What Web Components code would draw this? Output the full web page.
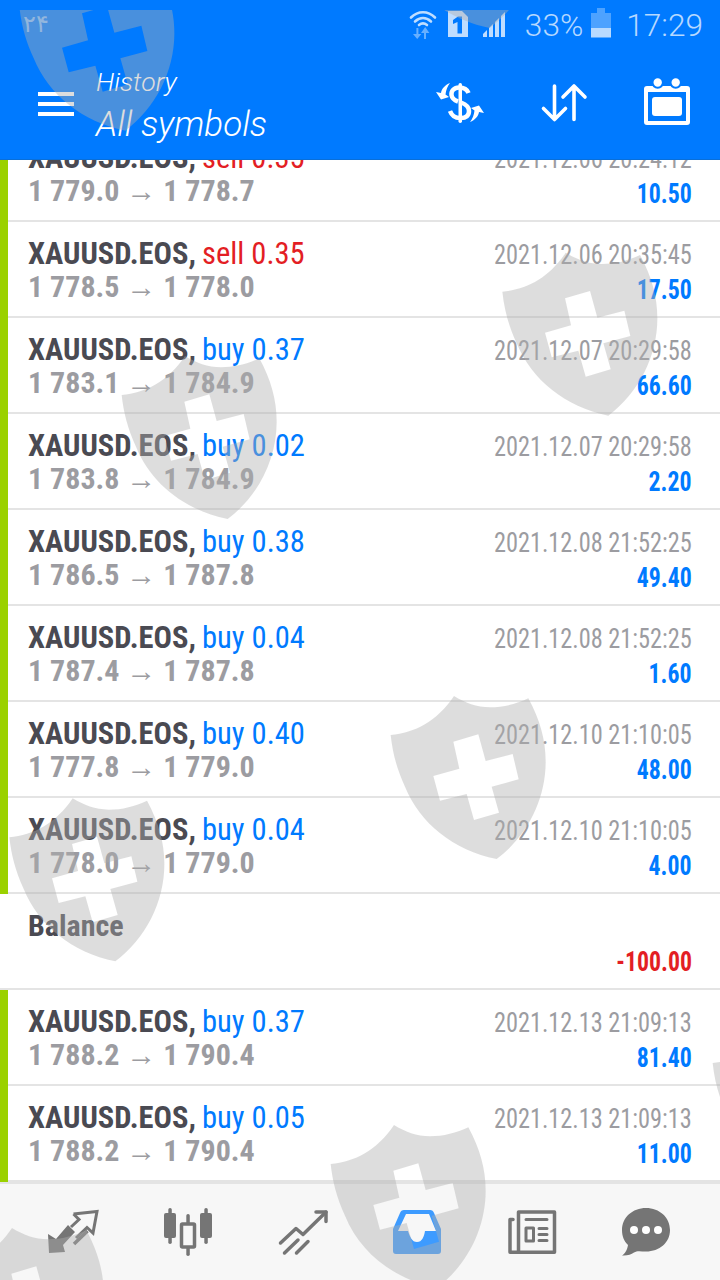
<!DOCTYPE html>
<html><head><meta charset="utf-8">
<style>
html,body{margin:0;padding:0;background:#fff}
body{width:720px;height:1280px;overflow:hidden;font-family:"Roboto","Liberation Sans",sans-serif}
b.bu,b.se{font-weight:400;font-size:32px;display:inline-block;transform:scaleX(.955);transform-origin:left;margin-left:-1px}
b.bu{color:#007aff}
b.se{color:#e31e24}
</style></head><body>
<template id="t-app"><style>
:host{display:flex;flex-direction:column;width:720px;height:1280px;position:relative;overflow:hidden;background:#fff}
.list{flex:1;min-height:0;overflow:hidden}
.scroll{margin-top:-34px;display:flex;flex-direction:column}
</style>
<slot name="top"></slot>
<div class="list"><div class="scroll"><slot></slot></div></div>
<slot name="bottom"></slot>
<slot name="mark"></slot></template>

<template id="t-head"><style>
:host{display:flex;flex-direction:column;height:160px;box-sizing:border-box;background:#007aff;border-bottom:1px solid #0a6fd8;color:#fff;flex:none;position:relative;z-index:1}
.status{height:50px;display:flex;align-items:center;color:rgba(255,255,255,.72);font-size:31.600px;font-weight:300}
.day{font:400 24px "DejaVu Sans",sans-serif;margin-left:23px;margin-top:-2px;color:rgba(255,255,255,.5);flex:1}
.bar{flex:1;display:flex;align-items:flex-start;position:relative}
.burger{margin:42px 0 0 38px;width:36px;display:flex;flex-direction:column;gap:6px}
.burger i{display:block;height:4px;background:#fff}
.titles{margin:15px 0 0 22px;display:flex;flex-direction:column;font-style:italic;font-weight:300;flex:1}
.t1{font-size:26.600px;line-height:33px;}
.t2{font-size:35px;line-height:48px;margin-top:3px}
svg{display:block;flex:none}
.pct{margin-left:10px}
.time{margin:0 17px 0 15px}
</style>
<div class="status"><span class="day">۲۴</span>
<svg width="110" height="50" viewBox="405 0 110 50" fill="none">
<g stroke="#fff" stroke-opacity=".75" stroke-width="2.600" stroke-linecap="round"><path d="M411 17.500C418 10.500 428 10.500 435 17.500"/><path d="M415 21.500C420 17 426 17 431 21.500"/><path d="M419 25C421.500 23 424.500 23 427 25"/></g>
<g fill="#fff" fill-opacity=".4"><path d="M416 39v-6h-3l4.200-5 4.200 5h-3.400v6z" transform="rotate(180 417.200 33.500)"/><path d="M424 39v-6h-3l4.200-6 4.200 6h-3.400v6z"/></g>
<path d="M448 11h14l6 6v20h-20z" fill="#fff" fill-opacity=".75"/>
<path d="M453 20l5-3.500h4v17h-4.500v-11.500l-4.500 2z" fill="#007aff"/>
<path d="M483 37v-3l4-4v7zM489 37v-9l4-4v13zM495 37v-15l4-4v19zM501 37v-21l4-4v25z" fill="#fff" fill-opacity=".75"/>
</svg>
<span class="pct">33%</span>
<svg width="20" height="50" viewBox="0 0 20 50" style="margin-left:8px"><path d="M0 13h6v-5h8v5h6v15h-20z" fill="#fff" fill-opacity=".3"/><rect y="28" width="20" height="9.500" fill="#fff" fill-opacity=".72"/></svg>
<span class="time">17:29</span></div>
<div class="bar">
<div class="burger"><i></i><i></i><i></i></div>
<div class="titles"><span class="t1">History</span><span class="t2">All symbols</span></div>
<svg width="290" height="109" viewBox="420 51 290 109" style="position:absolute;left:420px;top:0">
<g fill="#fff">
<rect x="458.500" y="84" width="3.500" height="40" rx="1.700"/>
<path d="M450 84C445 86 441.500 90 441 94L436 93L441 100.500L449 98L445.500 95.500C446 91 447.500 87 450 84Z"/>
<path d="M450 84C445 86 441.500 90 441 94L436 93L441 100.500L449 98L445.500 95.500C446 91 447.500 87 450 84Z" transform="rotate(180 460 103.500)"/>
</g>
<g fill="none" stroke="#fff" stroke-width="4.500"><path d="M468.500 94C467 90 463 88.500 459 88.500C454 88.500 451 92 451.500 96C452 99.500 455 101.500 458 102.500"/><path d="M450 112C451.500 116 455 119 460 119"/><path d="M461 119C466 119 469 116.500 469 112C469 107.500 465 105 461 103.500"/></g>
<g fill="none" stroke="#fff" stroke-width="3.600" stroke-linecap="round" stroke-linejoin="round"><path d="M554.500 87V120.500M543.500 109.500L554.500 120.500L565.500 109.500"/><path d="M574 120.500V87M563 98L574 87L585 98"/></g>
<path fill-rule="evenodd" fill="#fff" d="M647 87H687Q690 87 690 90V123Q690 126 687 126H647Q644 126 644 123V90Q644 87 647 87ZM648 93V122H686V93Z"/>
<rect x="652" y="98" width="30" height="19" rx="3" fill="#fff"/>
<circle cx="657.700" cy="83.500" r="5.200" fill="#fff" stroke="#007aff" stroke-width="2"/><circle cx="675.700" cy="83.500" r="5.200" fill="#fff" stroke="#007aff" stroke-width="2"/>
</svg>
</div></template>

<template id="t-row"><style>
:host{display:block;height:96px;box-sizing:border-box;border-left:8px solid #9bd100;position:relative;flex:none}
:host([plain]){border-left:0;padding-left:8px}
.in{height:96px;box-sizing:border-box;border-bottom:2px solid #e4e4e4;padding:12px 28px 0 20px;display:flex;justify-content:space-between}
:host([plain]) .in{margin-left:-8px;padding-left:28px}
.col{display:flex;flex-direction:column}
.lf{padding-top:2px}
.r{align-items:flex-end;padding-top:4px}
.l1,.l2{height:35px;line-height:35px;white-space:nowrap;display:block;font-stretch:75%}
.lf .l1{height:33px}
.r .l1{height:34px}
.name{font-size:30.500px;font-weight:700;color:#4a4a52}
:host([plain]) .name{font-size:30px}
.px{font-size:30px;font-weight:700;color:#9c9ca1}
.tm{font-size:27px;font-weight:400;color:#9c9ca1;transform:scaleX(.9);transform-origin:right}
.pf{font-size:28px;font-weight:700;color:#007aff;transform:scaleX(.85);transform-origin:right}
:host([loss]) .pf{color:#e31e24}
</style><div class="in"><div class="col lf"><span class="l1 name"><slot name="name"></slot></span><span class="l2 px"><slot name="px"></slot></span></div>
<div class="col r"><span class="l1 tm"><slot name="tm"></slot></span><span class="l2 pf"><slot name="pf"></slot></span></div></div></template>

<template id="t-nav"><style>
:host{display:flex;height:98px;box-sizing:border-box;border-top:2px solid #e4e4e4;background:#f7f7f7;padding:0 16px;flex:none;position:relative;z-index:1}
::slotted(*){flex:1}
</style><slot></slot></template>

<template id="t-item"><style>
:host{display:flex;align-items:center;justify-content:center}
</style><slot></slot></template>

<template id="t-mark"><style>
:host{position:absolute;left:0;top:10px;width:720px;height:1270px;overflow:hidden;pointer-events:none;z-index:5;display:block}
svg{display:block}
</style>
<svg width="720" height="1270" viewBox="0 10 720 1270">
<defs><path id="s" fill="#afafaf" fill-opacity=".42" fill-rule="evenodd" transform="scale(.33333)" d="M222 18C255 38 290 52 330 52C370 52 410 42 445 25C480 90 497 150 497 215C497 330 440 440 350 507C220 480 120 400 75 290C50 235 38 190 32 135C105 128 170 95 222 18ZM220 155L295 133L317 213L398 192L416 268L335 290L357 368L282 390L260 312L180 332L160 258L238 236Z"/></defs>
<use href="#s" x="8.700" y="-38.300"/><use href="#s" x="373" y="-141"/>
<use href="#s" x="491.700" y="246.700"/><use href="#s" x="111" y="350"/>
<use href="#s" x="380" y="690"/><use href="#s" x="-1.300" y="792.300"/>
<use href="#s" x="702" y="1018"/><use href="#s" x="320" y="1119"/>
<use href="#s" x="-62" y="1222"/>
</svg></template>

<app-shell>
<app-head slot="top"></app-head>
<trade-row><span slot="name">XAUUSD.EOS, <b class="se">sell 0.35</b></span><span slot="px">1 779.0 → 1 778.7</span><span slot="tm">2021.12.06 20:24:12</span><span slot="pf">10.50</span></trade-row>
<trade-row><span slot="name">XAUUSD.EOS, <b class="se">sell 0.35</b></span><span slot="px">1 778.5 → 1 778.0</span><span slot="tm">2021.12.06 20:35:45</span><span slot="pf">17.50</span></trade-row>
<trade-row><span slot="name">XAUUSD.EOS, <b class="bu">buy 0.37</b></span><span slot="px">1 783.1 → 1 784.9</span><span slot="tm">2021.12.07 20:29:58</span><span slot="pf">66.60</span></trade-row>
<trade-row><span slot="name">XAUUSD.EOS, <b class="bu">buy 0.02</b></span><span slot="px">1 783.8 → 1 784.9</span><span slot="tm">2021.12.07 20:29:58</span><span slot="pf">2.20</span></trade-row>
<trade-row><span slot="name">XAUUSD.EOS, <b class="bu">buy 0.38</b></span><span slot="px">1 786.5 → 1 787.8</span><span slot="tm">2021.12.08 21:52:25</span><span slot="pf">49.40</span></trade-row>
<trade-row><span slot="name">XAUUSD.EOS, <b class="bu">buy 0.04</b></span><span slot="px">1 787.4 → 1 787.8</span><span slot="tm">2021.12.08 21:52:25</span><span slot="pf">1.60</span></trade-row>
<trade-row><span slot="name">XAUUSD.EOS, <b class="bu">buy 0.40</b></span><span slot="px">1 777.8 → 1 779.0</span><span slot="tm">2021.12.10 21:10:05</span><span slot="pf">48.00</span></trade-row>
<trade-row><span slot="name">XAUUSD.EOS, <b class="bu">buy 0.04</b></span><span slot="px">1 778.0 → 1 779.0</span><span slot="tm">2021.12.10 21:10:05</span><span slot="pf">4.00</span></trade-row>
<trade-row plain loss><span slot="name">Balance</span><span slot="pf">-100.00</span></trade-row>
<trade-row><span slot="name">XAUUSD.EOS, <b class="bu">buy 0.37</b></span><span slot="px">1 788.2 → 1 790.4</span><span slot="tm">2021.12.13 21:09:13</span><span slot="pf">81.40</span></trade-row>
<trade-row><span slot="name">XAUUSD.EOS, <b class="bu">buy 0.05</b></span><span slot="px">1 788.2 → 1 790.4</span><span slot="tm">2021.12.13 21:09:13</span><span slot="pf">11.00</span></trade-row>
<nav-bar slot="bottom">
<nav-item><svg width="60" height="60" viewBox="43 1201 60 60"><path d="M73.500 1213L97 1210.500L93 1232L87 1226.500L76 1237M73.500 1213L79 1218.500L71 1226" fill="none" stroke="#757575" stroke-width="3"/>
<path d="M87.500 1230L74 1243" fill="none" stroke="#757575" stroke-width="3.500"/>
<path d="M48 1233L56 1238L68 1224L75 1231L63 1244L65 1251L49 1252Z" fill="#757575"/></svg></nav-item>
<nav-item><svg width="60" height="60" viewBox="157 1201 60 60" fill="#757575"><rect x="167.300" y="1207" width="3.500" height="36" rx="1.700"/><rect x="163" y="1212" width="12" height="25" rx="2"/><rect x="203.300" y="1207" width="3.500" height="36" rx="1.700"/><rect x="199" y="1212" width="12" height="25" rx="2"/><rect x="185.300" y="1213" width="3.500" height="42" rx="1.700"/><rect x="180.500" y="1223" width="13" height="23" rx="1" fill="#f7f7f7" stroke="#757575" stroke-width="3.500"/></svg></nav-item>
<nav-item><svg width="60" height="60" viewBox="272 1201 60 60" fill="none" stroke="#757575" stroke-width="3.500" stroke-linecap="round" stroke-linejoin="round"><path d="M279.500 1242L295 1227.500L302 1233.500L325 1211"/><path d="M315 1211H325V1220.500"/><path d="M283.500 1252L297 1239M295.500 1252L307 1240.500"/></svg></nav-item>
<nav-item><svg width="60" height="60" viewBox="387 1201 60 60"><path fill="#3d9bff" fill-rule="evenodd" d="M404 1209H430Q433 1209 434 1212L441 1228V1250Q441 1253 438 1253H396Q393 1253 393 1250V1228L400 1212Q401 1209 404 1209ZM406 1213L398 1230H408C410 1236 412 1241 417 1241C422 1241 424 1236 425 1230H436L429 1213Z"/></svg></nav-item>
<nav-item><svg width="60" height="60" viewBox="502 1201 60 60"><g fill="none" stroke="#757575" stroke-width="3.500" stroke-linecap="round" stroke-linejoin="round"><path d="M518.500 1250.800V1211H554.500V1251.300H510V1218.500H513"/><path d="M526 1218.500H547M539 1227.500H547M539 1233.500H547M539 1239.500H547" stroke-width="3"/><rect x="526" y="1227" width="7.500" height="13" stroke-width="3"/></g></svg></nav-item>
<nav-item><svg width="60" height="60" viewBox="617 1201 60 60"><path fill="#757575" d="M646 1207C659.500 1207 670 1216.500 670 1229C670 1241.500 659.500 1250.500 646 1250.500C641 1250.500 637 1249.500 634 1251.500C631 1253.500 627 1255 622 1254.500C625 1252.500 627 1249.500 628 1244C624 1240.500 622 1235 622 1229C622 1216.500 632.500 1207 646 1207Z"/><g fill="#fff"><circle cx="634" cy="1229" r="4"/><circle cx="646" cy="1229" r="4"/><circle cx="658" cy="1229" r="4"/></g></svg></nav-item>
</nav-bar>
<water-mark slot="mark"></water-mark>
</app-shell>
<script>
const def=(n,t)=>customElements.define(n,class extends HTMLElement{constructor(){super();this.attachShadow({mode:'open'}).appendChild(document.getElementById(t).content.cloneNode(true))}});
def('app-shell','t-app');def('app-head','t-head');def('trade-row','t-row');def('nav-bar','t-nav');def('nav-item','t-item');def('water-mark','t-mark');
</script>
</body></html>
